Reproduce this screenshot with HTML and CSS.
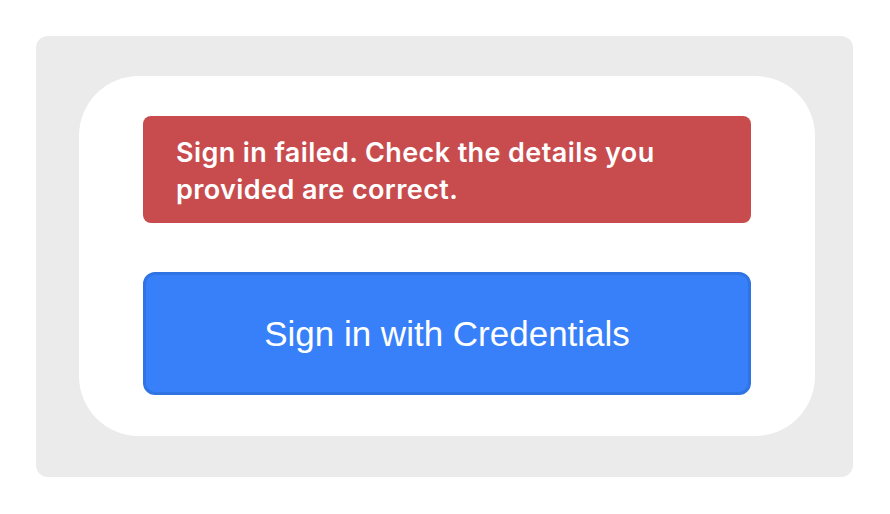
FILE: index.html
```html
<!DOCTYPE html>
<html lang="en">
<head>
<meta charset="utf-8">
<title>Sign in</title>
<link rel="stylesheet" href="styles.css">
</head>
<body>
<div class="frame">
  <div class="card">
    <div class="alert">Sign in failed. Check the details you provided are correct.</div>
    <button class="signin" type="button">Sign in with Credentials</button>
  </div>
</div>
</body>
</html>
```

FILE: styles.css
```css
html, body {
  margin: 0;
  padding: 0;
  background: #ffffff;
}
body {
  padding: 36px 37px 37px 36px;
  box-sizing: border-box;
  width: 890px;
  height: 514px;
}
.frame {
  background: #ebebeb;
  border-radius: 12px;
  padding: 40px 38px 41px 43px;
  height: 441px;
  box-sizing: border-box;
}
.card {
  background: #ffffff;
  border-radius: 60px;
  padding: 40px 64px 41px 64px;
  display: flex;
  flex-direction: column;
  gap: 49px;
  height: 360px;
  box-sizing: border-box;
}
.alert {
  background: #c84c4e;
  color: #ffffff;
  border-radius: 8px;
  font-family: Inter, "Noto Sans", sans-serif;
  font-weight: 600;
  font-size: 27px;
  letter-spacing: 0.4px;
  line-height: 37px;
  padding: 18px 60px 15px 33px;
  height: 107px;
  box-sizing: border-box;
}
.signin {
  display: block;
  width: 100%;
  height: 123px;
  background: #3780fa;
  border: 3px solid #2f74e2;
  border-radius: 12px;
  color: #ffffff;
  font-family: "Liberation Sans", Arial, sans-serif;
  font-size: 35px;
  padding: 0;
  margin: 0;
  cursor: pointer;
}
```
